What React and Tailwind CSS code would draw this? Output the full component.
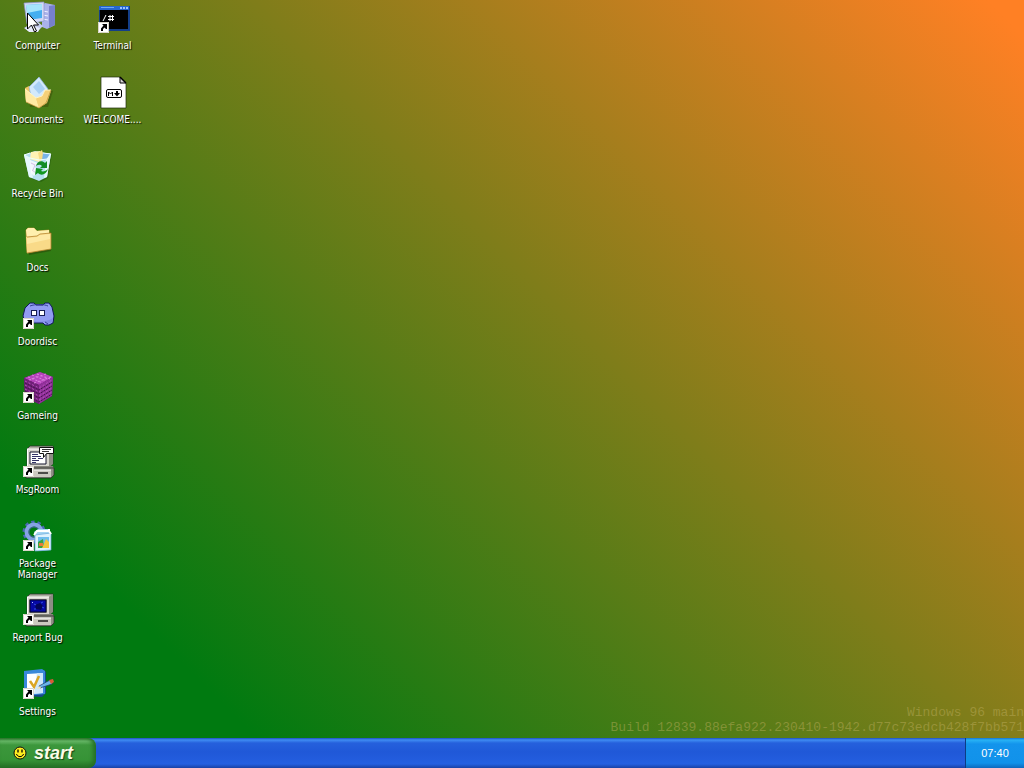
function Shortcut() {
  return (
    <g>
      <rect x="1" y="20" width="11" height="11" fill="#fff" />
      <path d="M1.500 20.500h10v10h-10z" fill="none" stroke="#d8d4c8" />
      <path d="M5 22h5v5h-1l-1.500-1.500L6 27v2H4v-2.500l2.500-3z" fill="#000" />
    </g>
  )
}

function ComputerIcon() {
  return (
    <>
      <path d="M20 3l3-2 10 2v20l-8 4-5-2z" fill="#aab2ea" />
      <path d="M27 4l6-1v20l-6 3z" fill="#7780cc" />
      <path d="M21 9l5 1M21 13l5 1M21 17l5 1" stroke="#eef" />
      <path d="M2 1l20-1v19L5 22z" fill="#d3d9f6" stroke="#8992c8" strokeWidth=".7" />
      <path d="M4 3l16-1v14L6 18z" fill="#45aef0" />
      <path d="M4 3l16-1v6L5 11z" fill="#a5e4fa" />
      <path d="M7 23l9-3 5 4-5 5H6l-4-3z" fill="#c4cbec" />
      <path d="M3 26l8-2 7 2-2 4H7z" fill="#e8ecfb" />
    </>
  )
}

function TerminalIcon() {
  return (
    <>
      <rect x="2" y="4" width="31" height="25" fill="#143f88" />
      <path d="M2 4h30v4H2z" fill="#2767cd" />
      <path d="M4 5.500h13" stroke="#6ca8f4" />
      <path d="M23 5h2v2h-2zM26 5h2v2h-2zM29 5h2v2h-2z" fill="#9ac4ff" />
      <path d="M3 8h28v19H3z" fill="#000" />
      <path d="M6 19l3-6M11 14.500h6M11 17.500h6M13 13v6M15.500 13v6" stroke="#fff" fill="none" />
      <Shortcut />
    </>
  )
}

function DocumentsIcon() {
  return (
    <>
      <path d="M6 12l6-2 16 4 3 1-5 16-18 0z" fill="#3c4a08" opacity=".5" />
      <path d="M3 12l4-2 4 1 10 3-2 15-15-3z" fill="#f0c662" />
      <path d="M7 11L17 1l9 12-8 13-9-6z" fill="#d3e9fb" stroke="#8db4dc" strokeWidth=".7" />
      <path d="M11 11l6-6 6 8-6 5z" fill="#a8d0f4" />
      <path d="M3 13l12 10 14-8-4 12-8 5-13-6z" fill="#f6d27a" />
      <path d="M3 13l11 9 3 10-13-6z" fill="#ffeaa4" />
      <path d="M14 22l6-2 3-6 6 0-5 13-7 5z" fill="#f5d078" />
      <path d="M3 13l11 9 6-2 3-6h6" fill="none" stroke="#fff4c4" />
      <path d="M29 14l-5 13-7 5-13-6" fill="none" stroke="#b88c30" strokeWidth=".7" />
    </>
  )
}

function MarkdownIcon() {
  return (
    <>
      <path d="M4 1h19l6 6v25H4z" fill="#fff" stroke="#1e2b0b" strokeWidth=".7" />
      <path d="M23 1v6h6z" fill="#d5d5d5" stroke="#000" />
      <path d="M23 1l6 6" stroke="#000" strokeWidth="1.500" />
      <rect x="9.500" y="13.500" width="15" height="8" rx="1.500" fill="#fff" stroke="#000" />
      <path d="M11.500 20v-4l2 2 2-2v4" fill="none" stroke="#000" />
      <path d="M19 15h2v2h2l-3 3.500-3-3.500h2z" fill="#000" />
    </>
  )
}

function RecycleIcon() {
  return (
    <>
      <path d="M5 5l25-1-4 24-7 4-9-3z" fill="#164b0a" opacity=".4" />
      <path d="M2 5l11-4 16 3-4 23-8 4-10-4z" fill="#b5dff0" />
      <path d="M2 5l6 3 3 20-4-1zM29 4l-5 6-2 18 3-1z" fill="#e6f7fc" />
      <path d="M9 2l9-1 3 6-4 5-9-3z" fill="#fff3b4" />
      <path d="M16 3l4-3 2 7-4 5z" fill="#f7dc83" />
      <path d="M21 3l7 0-3 6-5 1z" fill="#78b4e8" />
      <path d="M8 10l8 3-3 4 4 3-5 6-3-3z" fill="#fff" opacity=".8" />
      <path d="M9 13l4 2-2 5M10 20l4 3" fill="none" stroke="#c8a8dc" strokeWidth=".7" />
      <path d="M2 5l6-2M29 4l-8-1M2 5l6 3 9 2 8-1 4-5" fill="none" stroke="#eaffff" />
      <path d="M14 16c1-5 6-6 9-3l2-2v7h-7l2-2c-2-2-4-1-6 0z" fill="#128c25" />
      <path d="M26 19c-2 6-7 7-10 4l-3 2 1-7 7 1-2 2c2 1 5 0 7-2z" fill="#129622" />
    </>
  )
}

function FolderIcon() {
  return (
    <>
      <path d="M6 8h23v19L7 31z" fill="#2c4808" opacity=".6" />
      <path d="M4 6l2-2 6 0 3 3 12-1 1 18L5 29z" fill="#f0ca72" stroke="#be9135" strokeWidth=".7" />
      <path d="M4 6l2-2 6 0 3 3 12-1v5L5 14z" fill="#fff0ae" />
      <path d="M4 13l11-1 3-2 11-1v16L5 29z" fill="#f9da88" />
      <path d="M5 14l10-1 3-2 10-1v5L5 20z" fill="#fee9a4" />
      <path d="M5 29l24-4V9l-11 1-3 2-10 1" fill="none" stroke="#b78731" strokeWidth=".8" />
    </>
  )
}

function DoordiscIcon() {
  return (
    <>
      <path d="M8 5h4l2 2h7l2-2h4l3 4 2 9-1 7-4 2h-4l-2-2H12l-3 2-6-3-2-6 2-8z" fill="#919cf2" stroke="#10165c" />
      <path d="M4 20c8 5 19 5 27 0l-1 4-4 2-3-2H11z" fill="#7f8ce6" />
      <path d="M8 8c5-2 14-2 18 0M26 26l-3-2" fill="none" stroke="#343f94" />
      <rect x="9.500" y="12.500" width="5" height="5" fill="#fff" stroke="#171c54" />
      <rect x="17.500" y="12.500" width="5" height="5" fill="#fff" stroke="#171c54" />
      <Shortcut />
    </>
  )
}

function CubeIcon() {
  return (
    <>
      <path d="M2 6L18 0l13 5-1 19-13 8L3 25z" fill="#58125f" />
      <path d="M2 6L18 0l13 5-14 8z" fill="#b444ba" />
      <path d="M2 6l15 7v19L3 25z" fill="#702078" />
      <path d="M17 13l14-8-1 19-13 8z" fill="#91309a" />
      <path d="M6 5l15 6M10 3l15 6M15 2l13 5M7 8l17-6M12 11l17-6" stroke="#d77edb" strokeWidth="1.200" strokeDasharray="2 2" />
      <path d="M3 11l14 7 13-8M3 15l14 7 13-8M3 19l14 7 13-8M3 23l14 7 13-8" fill="none" stroke="#44124c" strokeDasharray="2 1" />
      <path d="M3 9l14 7 13-8M3 13l14 7 13-8M3 17l14 7 13-8M3 21l14 7 13-8" fill="none" stroke="#b64fbb" strokeDasharray="2 2" />
      <Shortcut />
    </>
  )
}

function ClassicPc() {
  return (
    <>
      <path d="M5 3l3-3h23v18l-4 3H5z" fill="#ababa0" stroke="#292929" strokeWidth=".7" />
      <path d="M5 3h22v18H5z" fill="#d8d6ce" />
      <path d="M27 3l4-3v18l-4 3z" fill="#8d8d84" />
      <path d="M5 3h22M5.500 3v18" stroke="#fff" />
      <path d="M9 22l3-2h19l1 3-3 3z" fill="#85857c" />
      <path d="M4 24l4-2h24v7l-3 3H4z" fill="#8f8f86" stroke="#222" strokeWidth=".7" />
      <path d="M4 24h25v7H4z" fill="#cbc9c0" />
      <path d="M4 24h25" stroke="#fff" />
      <path d="M16 27h10" stroke="#222" strokeWidth="1.500" />
    </>
  )
}

function MessageIcon() {
  return (
    <>
      <ClassicPc />
      <path d="M8 6h16v12H8z" fill="#fff" stroke="#15152c" />
      <path d="M10 8.500h6M10 10.500h9M10 12.500h4M16 12.500h5M10 14.500h7M10 16.500h4" stroke="#343467" />
      <path d="M17.500 1.500h14v6h-7l-3 4v-4h-4z" fill="#fff" stroke="#111" />
      <path d="M20 3.500h9M20 5.500h7" stroke="#333" />
      <Shortcut />
    </>
  )
}

function PackageIcon() {
  return (
    <>
      <circle cx="12" cy="12" r="9.500" fill="none" stroke="#4b69b5" strokeWidth="4" strokeDasharray="3.200 2.770" />
      <circle cx="12" cy="12" r="7.500" fill="none" stroke="#86a2e5" strokeWidth="4" />
      <circle cx="12" cy="12" r="5" fill="none" stroke="#4660a4" />
      <path d="M12 12l4-3h10l3 4v17l-14 1z" fill="#a4d5f3" />
      <path d="M13 15l16-2v17l-16 1z" fill="#def2fd" stroke="#68a7d8" strokeWidth=".7" />
      <path d="M12 15l3-4h12l2 3M27 11v-2" fill="none" stroke="#fff" strokeWidth="2" />
      <path d="M16 17h11v11H16z" fill="#6fbdec" />
      <path d="M16 28v-6l5-3 1 9z" fill="#37a444" />
      <path d="M21 26l3-7 3 3v6h-7z" fill="#f4c63b" />
      <path d="M17 23h4v3h-4z" fill="#ea793b" />
      <Shortcut />
    </>
  )
}

function BugIcon() {
  return (
    <>
      <ClassicPc />
      <path d="M7 5h18v14H7z" fill="#85857d" />
      <path d="M8 6h16v12H8z" fill="#0508a5" stroke="#05052c" />
      <path d="M13 11l5-2 3 3-2 4-5-1z" fill="#020557" />
      <path d="M12 10l2 1M19 9l2-1M12 15h2M20 13l2 1" stroke="#3450e0" />
      <path d="M10 8h1v1h-1z" fill="#b5c5ff" />
      <Shortcut />
    </>
  )
}

function SettingsIcon() {
  return (
    <>
      <path d="M2 4l20-2 2 2v21l-4 4-18-1z" fill="#184888" />
      <path d="M2 3l18-2 3 2v23L2 28z" fill="#3988da" />
      <path d="M5 6l16-1v20l-16 1z" fill="#fff" />
      <path d="M15 5h6v20l-9 1z" fill="#cee7fa" />
      <path d="M8 13l4 6 5-11" fill="none" stroke="#d9a524" strokeWidth="2.500" />
      <path d="M17 18l11-6 3 1-1 3-12 4z" fill="#69b4e9" stroke="#203b65" strokeWidth=".7" />
      <path d="M27 12l4-1 1 3-3 2z" fill="#d85d35" />
      <path d="M15 21l3-3 1 2z" fill="#f5e1a5" />
      <Shortcut />
    </>
  )
}

const items = [
  { name: 'Computer', Icon: ComputerIcon },
  { name: 'Documents', Icon: DocumentsIcon },
  { name: 'Recycle Bin', Icon: RecycleIcon },
  { name: 'Docs', Icon: FolderIcon },
  { name: 'Doordisc', Icon: DoordiscIcon },
  { name: 'Gameing', Icon: CubeIcon },
  { name: 'MsgRoom', Icon: MessageIcon },
  { name: 'Package Manager', Icon: PackageIcon },
  { name: 'Report Bug', Icon: BugIcon },
  { name: 'Settings', Icon: SettingsIcon },
  { name: 'Terminal', Icon: TerminalIcon },
  { name: 'WELCOME.md', label: 'WELCOME....', Icon: MarkdownIcon },
]

function DesktopItem({ name, label, Icon }) {
  return (
    <button
      type="button"
      title={name}
      className="flex flex-col items-center gap-1.5 px-1 pt-0.5 text-center text-white"
    >
      <svg viewBox="0 0 32 32" className="size-8 shrink-0 overflow-visible" aria-hidden="true">
        <Icon />
      </svg>
      <span className="text-[10px] leading-[11px] [text-shadow:1px_1px_1px_#000]">{label ?? name}</span>
    </button>
  )
}

export default function App() {
  return (
    <div className="relative flex h-screen flex-col overflow-hidden bg-[linear-gradient(45deg,#007a10_16%,#ff8024_98%)] font-['DejaVu_Sans_Condensed','DejaVu_Sans',sans-serif]">
      <main className="grid min-h-0 flex-1 auto-cols-[75px] grid-flow-col grid-rows-[repeat(10,74px)]">
        {items.map((item) => (
          <DesktopItem key={item.name} {...item} />
        ))}
      </main>

      <p className="absolute right-0 bottom-[33px] text-right font-['Liberation_Mono',monospace] text-[13px] leading-[15px] text-[#c0b060]/45">
        Windows 96 main
        <br />
        Build 12839.88efa922.230410-1942.d77c73edcb428f7bb571
      </p>

      <footer className="flex h-[30px] shrink-0 bg-[linear-gradient(#1f4fc0_0,#3f8cf3_2px,#2560dc_5px,#2058d8_14px,#245fe0_26px,#1941a5_30px)]">
        <button
          type="button"
          className="flex w-24 items-center gap-1.5 rounded-r-lg bg-[linear-gradient(#2f7a2f_0,#69b969_3px,#3c973c_7px,#369336_22px,#256f25_30px)] pl-3 text-[#fbfbe8] shadow-[inset_-3px_0_4px_#256f25]"
        >
          <svg viewBox="0 0 16 16" className="size-4" aria-hidden="true">
            <circle cx="8" cy="8" r="6" fill="#ffed21" stroke="#111" />
            <path d="M6 4.500v3M10 4.500v3" stroke="#000" strokeWidth="1.300" />
            <path d="M4.500 9c1 3.500 6 3.500 7 0" fill="none" stroke="#000" />
          </svg>
          <span className="font-['Liberation_Sans',sans-serif] text-lg leading-5 font-bold italic [text-shadow:1px_1px_1px_#174417]">
            start
          </span>
        </button>
        <div className="flex-1" />
        <time className="flex w-[59px] items-center justify-center border-l border-[#0c3c85] bg-[linear-gradient(#1873d0_0,#28b2f5_2px,#1394ec_6px,#1192ea_25px,#0e69bd_30px)] font-['Liberation_Sans',sans-serif] text-[11px] text-white">
          07:40
        </time>
      </footer>

      <svg viewBox="0 0 12 21" className="absolute top-3 left-[27px] h-[21px] w-3" aria-hidden="true">
        <path d="M.5 1v16l4-4 3 7 2-1-3-6h5z" fill="#fff" stroke="#000" />
      </svg>
    </div>
  )
}
